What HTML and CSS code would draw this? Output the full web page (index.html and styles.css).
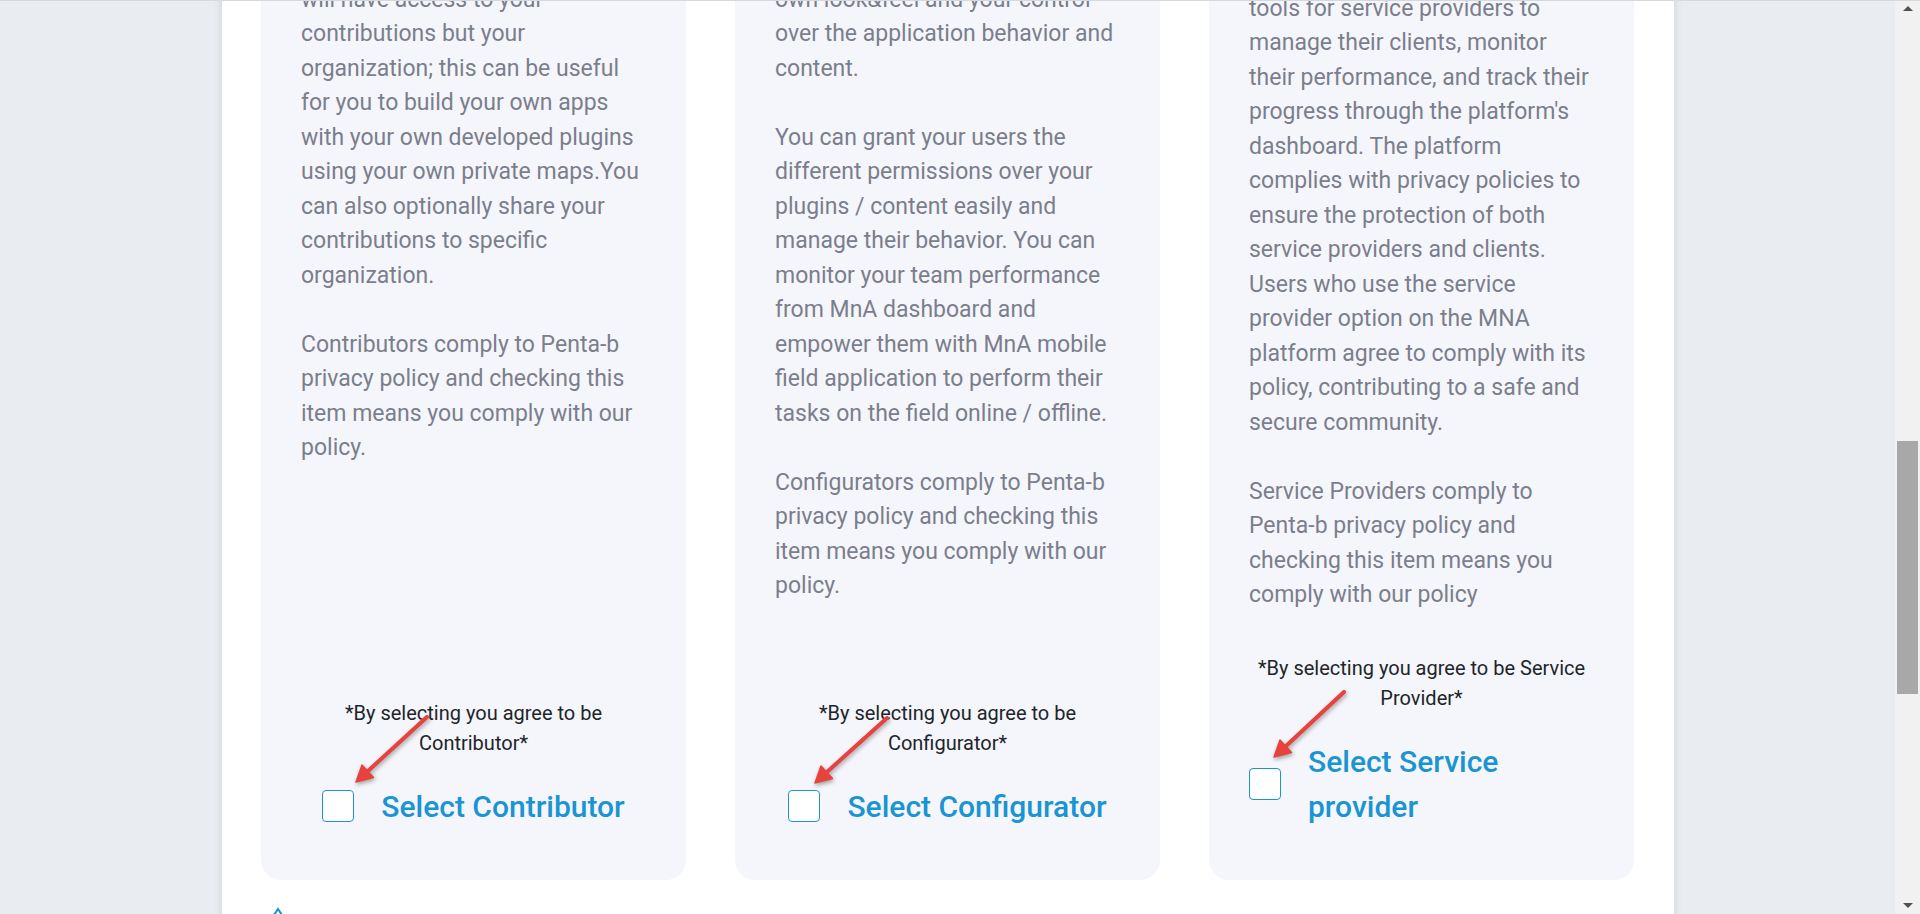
FILE: index.html
```html
<!DOCTYPE html>
<html lang="en">
<head>
<meta charset="utf-8">
<title>Select role</title>
<link rel="stylesheet" href="styles.css">
</head>
<body>
<div class="screen">
  <div class="topline"></div>
  <div class="viewport">
    <div class="panel">
      <div class="cards">
        <div class="card">
          <div class="card-text">
            <p>will have access to your contributions but your organization; this can be useful for you to build your own apps with your own developed plugins using your own private maps.You can also optionally share your contributions to specific organization.</p>
            <p>Contributors comply to Penta-b privacy policy and checking this item means you comply with our policy.</p>
          </div>
          <div class="card-foot">
            <p class="agree">*By selecting you agree to be Contributor*</p>
            <label class="select-row">
              <span class="box"></span>
              <span class="select-label">Select Contributor</span>
            </label>
          </div>
        </div>
        <div class="card">
          <div class="card-text">
            <p>own look&amp;feel and your control over the application behavior and content.</p>
            <p>You can grant your users the different permissions over your plugins / content easily and manage their behavior. You can monitor your team performance from MnA dashboard and empower them with MnA mobile field application to perform their tasks on the field online / offline.</p>
            <p>Configurators comply to Penta-b privacy policy and checking this item means you comply with our policy.</p>
          </div>
          <div class="card-foot">
            <p class="agree">*By selecting you agree to be Configurator*</p>
            <label class="select-row">
              <span class="box"></span>
              <span class="select-label">Select Configurator</span>
            </label>
          </div>
        </div>
        <div class="card card-offset">
          <div class="card-text">
            <p>tools for service providers to manage their clients, monitor their performance, and track their progress through the platform's dashboard. The platform complies with privacy policies to ensure the protection of both service providers and clients. Users who use the service provider option on the MNA platform agree to comply with its policy, contributing to a safe and secure community.</p>
            <p>Service Providers comply to Penta-b privacy policy and checking this item means you comply with our policy</p>
          </div>
          <div class="card-foot">
            <p class="agree">*By selecting you agree to be Service Provider*</p>
            <label class="select-row">
              <span class="box"></span>
              <span class="select-label">Select Service provider</span>
            </label>
          </div>
        </div>
      </div>
      <div class="next">
        <svg class="next-icon" width="12" height="10" viewBox="0 0 12 10"><path d="M2 8 L6 2 L10 8" fill="none" stroke="#1a94d2" stroke-width="2"/></svg>
      </div>
    </div>
    <svg class="annotations" width="1895" height="914" viewBox="0 0 1895 914">
      <g class="arrow">
        <line x1="427" y1="717" x2="368" y2="771"/>
        <polygon points="356,782 373.5,777.5 362,765"/>
      </g>
      <g class="arrow">
        <line x1="887" y1="718" x2="827" y2="772"/>
        <polygon points="815,783 832.5,778.5 821,766"/>
      </g>
      <g class="arrow">
        <line x1="1344" y1="692" x2="1286" y2="746"/>
        <polygon points="1274,757 1291.5,752.5 1280,740"/>
      </g>
    </svg>
  </div>
  <div class="scrollbar">
    <div class="sb-btn"><span class="tri-up"></span></div>
    <div class="sb-track">
      <div class="sb-thumb" style="margin-top: 424px; height: 253px;"></div>
    </div>
    <div class="sb-btn"><span class="tri-down"></span></div>
  </div>
</div>
</body>
</html>
```

FILE: styles.css
```css
* { box-sizing: border-box; }

html, body {
  margin: 0;
  padding: 0;
  height: 914px;
  overflow: hidden;
}

body {
  background: #e9edf1;
  font-family: Roboto, "Liberation Sans", sans-serif;
}

.screen {
  position: relative;
  display: flex;
  height: 914px;
  overflow: hidden;
}

.topline {
  position: absolute;
  top: 0;
  left: 0;
  right: 0;
  height: 1px;
  background: #d5d8dc;
  z-index: 5;
}

.viewport {
  position: relative;
  flex: 1;
  overflow: hidden;
}

.panel {
  margin-left: 222px;
  width: 1452px;
  min-height: 1100px;
  background: #ffffff;
  box-shadow: 0 0 8px rgba(40, 60, 80, 0.16);
}

.cards {
  display: grid;
  grid-template-columns: repeat(3, 425px);
  column-gap: 49px;
  padding: 0 40px 0 39px;
  margin-top: -57.5px;
}

.card {
  display: flex;
  flex-direction: column;
  background: #f5f6fb;
  border-radius: 20px;
  padding: 40px 40px 51.5px;
}

.card-offset {
  padding-top: 49px;
}

.card-text {
  margin-bottom: 40px;
}

.card-text p {
  margin: 0 0 34.5px;
  font-size: 23px;
  line-height: 34.5px;
  color: #7b7e8c;
}

.card-text p:last-child {
  margin-bottom: 0;
}

.card-foot {
  margin-top: auto;
}

.agree {
  margin: 0 0 26px;
  text-align: center;
  font-size: 20px;
  line-height: 30px;
  color: #212529;
}

.select-row {
  display: flex;
  align-items: center;
  justify-content: center;
  gap: 27px;
}

.box {
  flex: none;
  width: 32px;
  height: 32px;
  background: #ffffff;
  border: 1px solid #1f93d2;
  border-radius: 4px;
}

.select-label {
  font-size: 30px;
  line-height: 45px;
  font-weight: 500;
  color: #1a94d2;
}

.next {
  padding: 27px 0 0 50px;
}

.next-icon {
  display: block;
}

.annotations {
  position: absolute;
  top: 0;
  left: 0;
  pointer-events: none;
}

.arrow {
  filter: drop-shadow(1px 2px 2px rgba(0, 0, 0, 0.35));
}

.arrow line {
  stroke: #e8423f;
  stroke-width: 4;
  stroke-linecap: round;
}

.arrow polygon {
  fill: #e8423f;
  stroke: #e8423f;
  stroke-width: 1.5;
  stroke-linejoin: round;
}

.scrollbar {
  flex: none;
  width: 25px;
  display: flex;
  flex-direction: column;
  background: #f1f1f1;
}

.sb-btn {
  flex: none;
  height: 17px;
  display: flex;
  align-items: center;
  justify-content: center;
}

.tri-up {
  width: 0;
  height: 0;
  border-left: 5px solid transparent;
  border-right: 5px solid transparent;
  border-bottom: 5px solid #505050;
}

.tri-down {
  width: 0;
  height: 0;
  border-left: 5px solid transparent;
  border-right: 5px solid transparent;
  border-top: 5px solid #505050;
}

.sb-track {
  flex: 1;
  padding: 0 2px 0 2px;
}

.sb-thumb {
  background: #a8a8a8;
}
```
